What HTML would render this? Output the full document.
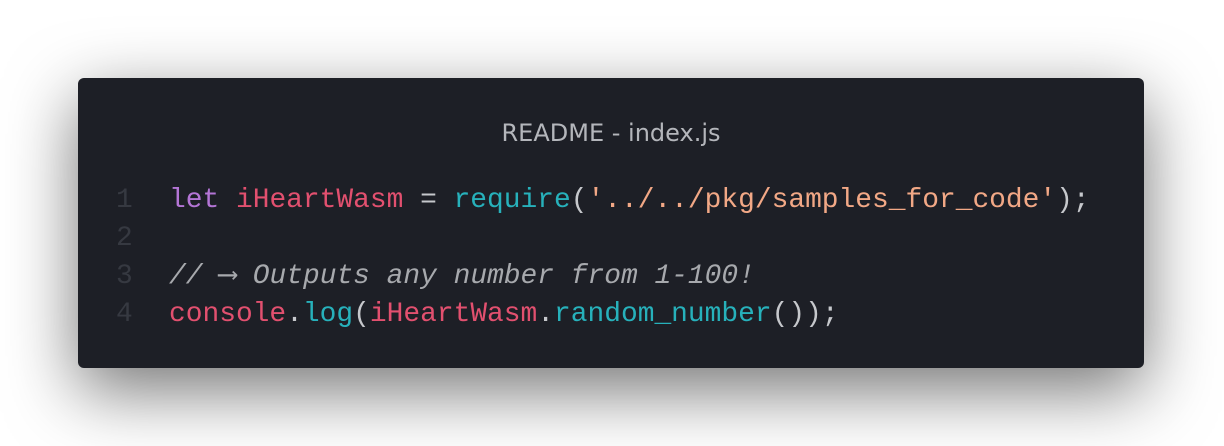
<!DOCTYPE html>
<html><head><meta charset="utf-8"><style>
html,body{margin:0;padding:0;background:#fff;width:1224px;height:446px;overflow:hidden}
.card{position:absolute;left:78px;top:78px;width:1066px;height:290px;background:#1d1f26;border-radius:6px;box-shadow:0 22px 70px rgba(0,0,0,0.55)}
.title{position:absolute;left:0;right:0;top:39px;text-align:center;font-family:"DejaVu Sans","Liberation Sans",sans-serif;font-size:24px;color:#b4b6bb;line-height:32px}
.code{position:absolute;left:0;top:104px;font-family:"Liberation Mono",monospace;font-size:27.9px;line-height:38px;white-space:pre;color:#c6c8cc}
.ln{position:absolute;left:38px;width:20px;color:#363941}
.l{position:absolute;left:91px}
.k{color:#b475d6}.v{color:#e2506f}.f{color:#27b1bb}.s{color:#f2a886}.c{color:#a7a9ad;font-style:italic}.p{color:#c6c8cc}
.ar{font-family:"DejaVu Sans Mono",monospace;font-style:normal;line-height:0}
</style></head><body>
<div class="card">
<div class="title">README - index.js</div>
<div class="code">
<div style="position:absolute;top:0"><span class="ln">1</span><span class="l"><span class="k">let</span> <span class="v">iHeartWasm</span> = <span class="f">require</span>(<span class="s">'../../pkg/samples_for_code'</span>);</span></div>
<div style="position:absolute;top:38px"><span class="ln">2</span></div>
<div style="position:absolute;top:76px"><span class="ln">3</span><span class="l c">// <span class="ar">⟶</span> Outputs any number from 1-100!</span></div>
<div style="position:absolute;top:114px"><span class="ln">4</span><span class="l"><span class="v">console</span>.<span class="f">log</span>(<span class="v">iHeartWasm</span>.<span class="f">random_number</span>());</span></div>
</div>
</div>
</body></html>
